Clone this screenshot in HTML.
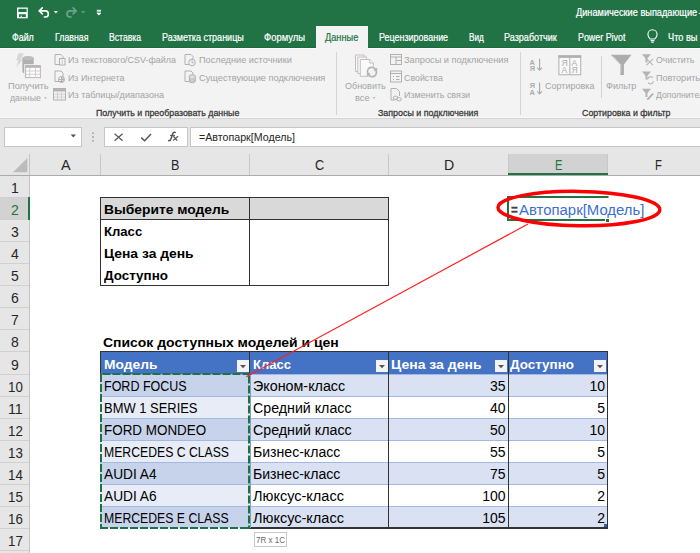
<!DOCTYPE html>
<html><head><meta charset="utf-8"><style>
html,body{margin:0;padding:0;}
body{width:700px;height:553px;overflow:hidden;position:relative;background:#fff;font-family:'Liberation Sans', sans-serif;}
.t{position:absolute;white-space:nowrap;line-height:1;transform-origin:0 0;}
svg{position:absolute;overflow:visible;}
</style></head><body>
<div style="position:absolute;left:0px;top:0px;width:700px;height:48px;background:#217346"></div>
<div style="position:absolute;left:0px;top:47px;width:700px;height:1px;background:#1c6b3f"></div>
<div style="position:absolute;left:0px;top:48px;width:700px;height:1px;background:#ffffff"></div>
<div style="position:absolute;left:0px;top:49px;width:700px;height:69px;background:#f3f3f3"></div>
<div style="position:absolute;left:0px;top:117px;width:700px;height:1px;background:#f8f8f8"></div>
<div style="position:absolute;left:0px;top:118px;width:700px;height:1px;background:#d4d4d4"></div>
<div style="position:absolute;left:0px;top:119px;width:700px;height:56px;background:#e6e6e6"></div>
<div style="position:absolute;left:316px;top:26px;width:52px;height:23px;background:#f3f3f3"></div>
<svg style="left:0;top:0" width="700" height="48" viewBox="0 0 700 48">
<rect x="17" y="7.5" width="10.8" height="10.8" fill="#fff"/>
<rect x="18.4" y="8.8" width="8.2" height="3.3" fill="#217346"/>
<rect x="19" y="14.2" width="6.8" height="2.9" fill="#217346"/>
<rect x="20.6" y="15.6" width="1.2" height="1.3" fill="#fff"/>
<g fill="none" stroke="#fff" stroke-width="1.6" stroke-linecap="round" stroke-linejoin="round">
 <path d="M39.4 10.9 H45.3 A3.05 3.05 0 0 1 45.3 17 H44.3"/>
 <path d="M42.3 7.9 L39.3 10.9 L42.3 13.9"/>
</g>
<path d="M53.8 11.1 H58 L55.9 13.5 Z" fill="#fff"/>
<g fill="none" stroke="#6fa48a" stroke-width="1.6" stroke-linecap="round" stroke-linejoin="round">
 <path d="M76 10.9 H70.1 A3.05 3.05 0 0 0 70.1 17 H71.1"/>
 <path d="M73.1 7.9 L76.1 10.9 L73.1 13.9"/>
</g>
<path d="M81 11.1 H85.2 L83.1 13.5 Z" fill="#5f9a7d"/>
<rect x="96.8" y="9.8" width="4.2" height="1.0" fill="#fff"/>
<rect x="96.8" y="11.4" width="4.2" height="1.0" fill="#fff"/>
<path d="M96.5 13 H101.3 L98.9 15.5 Z" fill="#fff"/>
</svg>
<svg style="left:0;top:0" width="700" height="48">
<g fill="none" stroke="#fff" stroke-width="1.1">
<path d="M650.2 39 C648.6 37.2 647.9 35.8 647.9 34.4 A4.6 4.6 0 0 1 657.1 34.4 C657.1 35.8 656.4 37.2 654.8 39 Z"/>
<path d="M650.6 40.6 H654.4 M651.2 42.3 H653.8"/>
</g></svg>
<div style="position:absolute;left:336px;top:52px;width:1px;height:63px;background:#d3d3d3"></div>
<div style="position:absolute;left:520px;top:52px;width:1px;height:63px;background:#d3d3d3"></div>
<div style="position:absolute;left:601px;top:56px;width:1px;height:42px;background:#d3d3d3"></div>
<svg style="left:0;top:0" width="700" height="120">
<!-- get data big icon -->
<path d="M18.5 53.2 H24 L20.5 59.5 H23 L15.8 67.4 L18.5 60.5 H16.2 Z" fill="#d6d6d6"/>
<path d="M22.4 58.2 A5.65 2 0 0 1 33.7 58.2 V72 A5.65 2 0 0 1 22.4 72 Z" fill="#b0b0b0"/>
<ellipse cx="28" cy="58.2" rx="5.65" ry="2" fill="#bdbdbd"/>
<rect x="24.2" y="64.2" width="17.6" height="14.8" fill="#f3f3f3"/>
<rect x="25.6" y="65.6" width="14.8" height="12" fill="#fff" stroke="#b9b4b7" stroke-width="1"/>
<rect x="25.6" y="65.6" width="14.8" height="2.2" fill="#b5b5b5"/>
<path d="M25.6 71 H40.4 M25.6 74.3 H40.4 M29.8 67.8 V77.6 M35.5 67.8 V77.6" stroke="#d5cdd2" stroke-width="1"/>
<path d="M43.7 97.3 H47.1 L45.4 99.1 Z" fill="#b8b8b8"/>
<!-- small icons group1 -->
<g fill="none" stroke="#b3b0b2" stroke-width="1">
 <path d="M55 54.5 H61 L63 56.5 V64.5 H55 Z"/>
 <rect x="59.5" y="58.5" width="5.5" height="6.5" fill="#f3f3f3"/>
 <path d="M62.2 59.5 V64" stroke="#cfc8cc"/>
 <path d="M55 71 H61 L63 73 V81.5 H55 Z"/>
 <circle cx="61.5" cy="79.5" r="3"/>
 <path d="M58.5 79.5 H64.5 M61.5 76.5 V82.5"/>
 <path d="M53.5 91.3 H65.5 M53.5 94.2 H65.5 M53.5 97.1 H65.5 M57.5 88.5 V100 M61.5 88.5 V100" stroke="#d6cfd3"/>
 <rect x="53.5" y="88.5" width="12" height="11.5"/>
 <rect x="53.5" y="88.5" width="12" height="2" fill="#b5b5b5"/>
 <path d="M185 54.5 H191 L193 56.5 V64.5 H185 Z"/>
 <circle cx="192" cy="62.5" r="3.3" fill="#f3f3f3"/>
 <path d="M192 60.5 V62.7 H193.8"/>
 <path d="M185 71 H191 L193 73 V81.5 H185 Z"/>
 <path d="M189.3 76 A3 1.2 0 0 1 195.3 76 V81.6 A3 1.2 0 0 1 189.3 81.6 Z" fill="#e2dde0"/>
 <path d="M189.3 78 A3 1.2 0 0 0 195.3 78 M189.3 80 A3 1.2 0 0 0 195.3 80"/>
</g>
<!-- refresh all -->
<g fill="#faf9f9" stroke="#c2bec0" stroke-width="1">
 <path d="M355.5 55 H364 V71.5 H355.5 Z"/>
 <path d="M357.8 57 H366.3 V73.5 H357.8 Z"/>
 <path d="M360.3 59.5 H369.8 L373.3 63 V76.3 H360.3 Z"/>
 <path d="M369.8 59.5 V63 H373.3"/>
</g>
<circle cx="372" cy="72" r="5.8" fill="#f3f3f3"/>
<g fill="none" stroke="#b5b5b5" stroke-width="1.7">
 <path d="M367.9 73.2 A4.2 4.2 0 0 1 375.6 69.8"/>
 <path d="M376.1 70.8 A4.2 4.2 0 0 1 368.4 74.2"/>
</g>
<path d="M377.3 67.6 L377.1 71.6 L373.4 70.6 Z M366.7 76.4 L366.9 72.4 L370.6 73.4 Z" fill="#b5b5b5"/>
<path d="M372.3 97.3 H375.7 L374 99.1 Z" fill="#b8b8b8"/>
<g fill="none" stroke="#b3b0b2" stroke-width="1">
 <rect x="390.5" y="54.5" width="11" height="10"/>
 <path d="M390.5 57 H401.5 M396 57 V64.5 M396 60.5 H401.5"/>
 <rect x="390.5" y="71" width="11" height="11"/>
 <path d="M390.5 73.5 H401.5 M393 76.5 H394 M396 76.5 H399.5 M393 79.5 H394 M396 79.5 H399.5"/>
 <path d="M391 88.5 H396.5 L399.5 91.5 V96 M395 100 H391 V88.5"/>
 <rect x="393.3" y="96.2" width="4.6" height="3.2" rx="1.6"/>
 <rect x="396.6" y="97.6" width="4.6" height="3.2" rx="1.6"/>
</g>
<!-- sort icons -->
<g font-family="Liberation Sans" font-weight="bold" font-size="7.4" fill="#ababab">
 <text x="529.6" y="64.6">А</text><text x="529.8" y="70.8">Я</text>
 <text x="529.8" y="88.4">Я</text><text x="529.6" y="94.6">А</text>
</g>
<g fill="none" stroke="#a9a9a9" stroke-width="1.1">
 <path d="M539.6 58.8 V70 M537.3 67.6 L539.6 70.2 L541.9 67.6"/>
 <path d="M539.6 82.6 V93.8 M537.3 91.4 L539.6 94 L541.9 91.4"/>
</g>
<rect x="558.9" y="55.9" width="21.8" height="18.8" fill="#faf8f9" stroke="#b8b5b7" stroke-width="1.1"/>
<rect x="558.4" y="55.3" width="22.8" height="2.6" fill="#b0b0b0"/>
<path d="M569.8 57.8 V74.6" stroke="#b8b5b7" stroke-width="1.1"/>
<g font-family="Liberation Sans" font-size="8.6" fill="#ababab">
 <text x="561.4" y="65.7">Я</text><text x="571.6" y="65.7">А</text>
 <text x="561.4" y="73.2">А</text><text x="571.6" y="73.2">Я</text>
</g>
<!-- filter -->
<path d="M610.8 54.7 H631.5 L623.9 64.5 V75 H620.3 V64.5 Z" fill="#acacac"/>
<path d="M613.5 56.6 L620.8 64.8 V73.5" fill="none" stroke="#d4d4d4" stroke-width="0.9"/>
<path d="M641.9 54.3 H651 L647.4 58.6 V62.5 H645.5 V58.6 Z" fill="#b3b3b3"/>
<path d="M646.5 58.8 L653 65.2 M653 58.8 L646.5 65.2" stroke="#b5b5b5" stroke-width="1.1"/>
<path d="M641.9 71.5 H651 L647.4 75.8 V79.6 H645.5 V75.8 Z" fill="#b3b3b3"/>
<path d="M647.6 79.5 A3 3 0 0 1 653 78 M653.4 81.2 A3 3 0 0 1 648 82.7" fill="none" stroke="#b5b5b5" stroke-width="1.1"/>
<path d="M641.9 88.8 H651 L647.4 93.1 V97 H645.5 V93.1 Z" fill="#b3b3b3"/>
<path d="M647.3 99.6 L653.2 93.6" stroke="#b0b0b0" stroke-width="1.8"/>
</svg>
<div style="position:absolute;left:4px;top:127px;width:78px;height:20px;background:#fff;border:1px solid #c6c6c6;box-sizing:border-box"></div>
<div style="position:absolute;left:104px;top:127px;width:84px;height:20px;background:#fff;border:1px solid #c6c6c6;box-sizing:border-box"></div>
<div style="position:absolute;left:190px;top:127px;width:520px;height:20px;background:#fff;border:1px solid #c6c6c6;box-sizing:border-box"></div>
<svg style="left:0;top:0" width="700" height="160">
<path d="M70.7 134.6 H75.9 L73.3 137.4 Z" fill="#505050"/>
<g fill="#8a8a8a"><rect x="92.3" y="132.5" width="1.4" height="1.4"/><rect x="92.3" y="136.3" width="1.4" height="1.4"/><rect x="92.3" y="140.1" width="1.4" height="1.4"/></g>
<path d="M114.6 133.8 L122.6 140.8 M122.6 133.8 L114.6 140.8" stroke="#555" stroke-width="1.2"/>
<path d="M141.2 137.6 L144.6 140.8 L151 134" fill="none" stroke="#555" stroke-width="1.5"/>
<g fill="none" stroke="#555" stroke-linecap="round">
<path d="M168.6 140.6 C169.9 141 170.6 140.2 171.2 138.3 L172.6 134 C173.1 132.5 174 132 175.2 132.4" stroke-width="1.5"/>
<path d="M170.4 135.4 H174.6" stroke-width="1"/>
<path d="M173.6 136.6 C175 137 175.6 139.4 177 140.2 M177.8 136.6 C176.6 137.4 175 139.2 173.4 140.2" stroke-width="1.2"/>
</g>
</svg>
<svg style="left:0;top:0" width="700" height="180"><path d="M13 172.2 H27.4 V158 Z" fill="#bcbcbc"/></svg>
<div style="position:absolute;left:508px;top:154px;width:100px;height:21px;background:#d2d2d2"></div>
<div style="position:absolute;left:100px;top:154px;width:1px;height:21px;background:#c8c8c8"></div>
<div style="position:absolute;left:249px;top:154px;width:1px;height:21px;background:#c8c8c8"></div>
<div style="position:absolute;left:388px;top:154px;width:1px;height:21px;background:#c8c8c8"></div>
<div style="position:absolute;left:508px;top:154px;width:1px;height:21px;background:#c8c8c8"></div>
<div style="position:absolute;left:607px;top:154px;width:1px;height:21px;background:#c8c8c8"></div>
<div style="position:absolute;left:29px;top:154px;width:1px;height:399px;background:#c4c4c4"></div>
<div style="position:absolute;left:0px;top:175px;width:700px;height:1px;background:#ababab"></div>
<div style="position:absolute;left:508px;top:173px;width:100px;height:2px;background:#217346"></div>
<div style="position:absolute;left:30px;top:176px;width:670px;height:377px;background:#fff"></div>
<div style="position:absolute;left:0px;top:176px;width:29px;height:377px;background:#e6e6e6"></div>
<div style="position:absolute;left:0px;top:197px;width:29px;height:22px;background:#d2d2d2"></div>
<div style="position:absolute;left:0px;top:197px;width:29px;height:1px;background:#d0d0d0"></div>
<div style="position:absolute;left:0px;top:219px;width:29px;height:1px;background:#d0d0d0"></div>
<div style="position:absolute;left:0px;top:241px;width:29px;height:1px;background:#d0d0d0"></div>
<div style="position:absolute;left:0px;top:263px;width:29px;height:1px;background:#d0d0d0"></div>
<div style="position:absolute;left:0px;top:285px;width:29px;height:1px;background:#d0d0d0"></div>
<div style="position:absolute;left:0px;top:307px;width:29px;height:1px;background:#d0d0d0"></div>
<div style="position:absolute;left:0px;top:329px;width:29px;height:1px;background:#d0d0d0"></div>
<div style="position:absolute;left:0px;top:351px;width:29px;height:1px;background:#d0d0d0"></div>
<div style="position:absolute;left:0px;top:374px;width:29px;height:1px;background:#d0d0d0"></div>
<div style="position:absolute;left:0px;top:396px;width:29px;height:1px;background:#d0d0d0"></div>
<div style="position:absolute;left:0px;top:418px;width:29px;height:1px;background:#d0d0d0"></div>
<div style="position:absolute;left:0px;top:440px;width:29px;height:1px;background:#d0d0d0"></div>
<div style="position:absolute;left:0px;top:462px;width:29px;height:1px;background:#d0d0d0"></div>
<div style="position:absolute;left:0px;top:484px;width:29px;height:1px;background:#d0d0d0"></div>
<div style="position:absolute;left:0px;top:506px;width:29px;height:1px;background:#d0d0d0"></div>
<div style="position:absolute;left:0px;top:528px;width:29px;height:1px;background:#d0d0d0"></div>
<div style="position:absolute;left:0px;top:550px;width:29px;height:1px;background:#d0d0d0"></div>
<div style="position:absolute;left:28px;top:197px;width:2px;height:23px;background:#217346"></div>
<div style="position:absolute;left:100px;top:197px;width:289px;height:89px;border:1px solid #333;box-sizing:border-box"></div>
<div style="position:absolute;left:100px;top:197px;width:289px;height:23px;background:#d9d9d9;border:1px solid #333;box-sizing:border-box"></div>
<div style="position:absolute;left:249px;top:197px;width:1px;height:89px;background:#333"></div>
<div style="position:absolute;left:100px;top:351px;width:508px;height:23px;background:#4472c4"></div>
<div style="position:absolute;left:100px;top:374px;width:149px;height:22px;background:#c7d3eb"></div>
<div style="position:absolute;left:249px;top:374px;width:139px;height:22px;background:#d9e1f2"></div>
<div style="position:absolute;left:388px;top:374px;width:120px;height:22px;background:#d9e1f2"></div>
<div style="position:absolute;left:508px;top:374px;width:99px;height:22px;background:#d9e1f2"></div>
<div style="position:absolute;left:100px;top:396px;width:149px;height:22px;background:#e7ecf6"></div>
<div style="position:absolute;left:249px;top:396px;width:139px;height:22px;background:#ffffff"></div>
<div style="position:absolute;left:388px;top:396px;width:120px;height:22px;background:#ffffff"></div>
<div style="position:absolute;left:508px;top:396px;width:99px;height:22px;background:#ffffff"></div>
<div style="position:absolute;left:100px;top:418px;width:149px;height:22px;background:#c7d3eb"></div>
<div style="position:absolute;left:249px;top:418px;width:139px;height:22px;background:#d9e1f2"></div>
<div style="position:absolute;left:388px;top:418px;width:120px;height:22px;background:#d9e1f2"></div>
<div style="position:absolute;left:508px;top:418px;width:99px;height:22px;background:#d9e1f2"></div>
<div style="position:absolute;left:100px;top:440px;width:149px;height:22px;background:#e7ecf6"></div>
<div style="position:absolute;left:249px;top:440px;width:139px;height:22px;background:#ffffff"></div>
<div style="position:absolute;left:388px;top:440px;width:120px;height:22px;background:#ffffff"></div>
<div style="position:absolute;left:508px;top:440px;width:99px;height:22px;background:#ffffff"></div>
<div style="position:absolute;left:100px;top:462px;width:149px;height:22px;background:#c7d3eb"></div>
<div style="position:absolute;left:249px;top:462px;width:139px;height:22px;background:#d9e1f2"></div>
<div style="position:absolute;left:388px;top:462px;width:120px;height:22px;background:#d9e1f2"></div>
<div style="position:absolute;left:508px;top:462px;width:99px;height:22px;background:#d9e1f2"></div>
<div style="position:absolute;left:100px;top:484px;width:149px;height:22px;background:#e7ecf6"></div>
<div style="position:absolute;left:249px;top:484px;width:139px;height:22px;background:#ffffff"></div>
<div style="position:absolute;left:388px;top:484px;width:120px;height:22px;background:#ffffff"></div>
<div style="position:absolute;left:508px;top:484px;width:99px;height:22px;background:#ffffff"></div>
<div style="position:absolute;left:100px;top:506px;width:149px;height:22px;background:#c7d3eb"></div>
<div style="position:absolute;left:249px;top:506px;width:139px;height:22px;background:#d9e1f2"></div>
<div style="position:absolute;left:388px;top:506px;width:120px;height:22px;background:#d9e1f2"></div>
<div style="position:absolute;left:508px;top:506px;width:99px;height:22px;background:#d9e1f2"></div>
<div style="position:absolute;left:100px;top:374px;width:508px;height:1px;background:#a4b9e1"></div>
<div style="position:absolute;left:100px;top:396px;width:508px;height:1px;background:#a4b9e1"></div>
<div style="position:absolute;left:100px;top:418px;width:508px;height:1px;background:#a4b9e1"></div>
<div style="position:absolute;left:100px;top:440px;width:508px;height:1px;background:#a4b9e1"></div>
<div style="position:absolute;left:100px;top:462px;width:508px;height:1px;background:#a4b9e1"></div>
<div style="position:absolute;left:100px;top:484px;width:508px;height:1px;background:#a4b9e1"></div>
<div style="position:absolute;left:100px;top:506px;width:508px;height:1px;background:#a4b9e1"></div>
<div style="position:absolute;left:604px;top:524px;width:4px;height:3px;background:#3a5fb0"></div>
<div style="position:absolute;left:100px;top:351px;width:508px;height:1px;background:#333333"></div>
<div style="position:absolute;left:250px;top:527px;width:358px;height:2px;background:#333333"></div>
<div style="position:absolute;left:100px;top:351px;width:1px;height:23px;background:#333333"></div>
<div style="position:absolute;left:249px;top:351px;width:1px;height:23px;background:#333333"></div>
<div style="position:absolute;left:388px;top:351px;width:1px;height:178px;background:#333333"></div>
<div style="position:absolute;left:508px;top:351px;width:1px;height:178px;background:#333333"></div>
<div style="position:absolute;left:607px;top:351px;width:1px;height:178px;background:#333333"></div>
<div style="position:absolute;left:250px;top:374px;width:1px;height:154px;background:#7f9fd8"></div>
<div style="position:absolute;left:237px;top:360px;width:12px;height:12px;background:#f3f3f3"></div>
<div style="position:absolute;left:376px;top:360px;width:12px;height:12px;background:#f3f3f3"></div>
<div style="position:absolute;left:495px;top:360px;width:12px;height:12px;background:#f3f3f3"></div>
<div style="position:absolute;left:594px;top:360px;width:12px;height:12px;background:#f3f3f3"></div>
<svg style="left:0;top:0" width="700" height="553"><path d="M240 365 H246 L243 368.2 Z" fill="#555"/><path d="M379 365 H385 L382 368.2 Z" fill="#555"/><path d="M498 365 H504 L501 368.2 Z" fill="#555"/><path d="M597 365 H603 L600 368.2 Z" fill="#555"/></svg>
<div style="position:absolute;left:254px;top:532px;width:33px;height:15px;background:#fff;border:1px solid #c8c8c8;box-sizing:border-box"></div>
<div class="t" style="left:576.00px;top:7.83px;font-size:10px;font-weight:normal;color:#ffffff;transform:scaleX(0.9200);-webkit-text-stroke:0.2px #fff">Динамические выпадающие</div>
<div class="t" style="left:698.60px;top:7.83px;font-size:10px;font-weight:normal;color:#ffffff;">-</div>
<div class="t" style="left:11.60px;top:32.93px;font-size:10px;font-weight:normal;color:#ffffff;transform:scaleX(0.8864);-webkit-text-stroke:0.2px #fff">Файл</div>
<div class="t" style="left:55.30px;top:32.93px;font-size:10px;font-weight:normal;color:#ffffff;transform:scaleX(0.8775);-webkit-text-stroke:0.2px #fff">Главная</div>
<div class="t" style="left:109.30px;top:32.93px;font-size:10px;font-weight:normal;color:#ffffff;transform:scaleX(0.8636);-webkit-text-stroke:0.2px #fff">Вставка</div>
<div class="t" style="left:161.80px;top:32.93px;font-size:10px;font-weight:normal;color:#ffffff;transform:scaleX(0.9017);-webkit-text-stroke:0.2px #fff">Разметка страницы</div>
<div class="t" style="left:263.60px;top:32.93px;font-size:10px;font-weight:normal;color:#ffffff;transform:scaleX(0.9422);-webkit-text-stroke:0.2px #fff">Формулы</div>
<div class="t" style="left:378.60px;top:32.93px;font-size:10px;font-weight:normal;color:#ffffff;transform:scaleX(0.8949);-webkit-text-stroke:0.2px #fff">Рецензирование</div>
<div class="t" style="left:468.60px;top:32.93px;font-size:10px;font-weight:normal;color:#ffffff;transform:scaleX(0.8180);-webkit-text-stroke:0.2px #fff">Вид</div>
<div class="t" style="left:504.30px;top:32.93px;font-size:10px;font-weight:normal;color:#ffffff;transform:scaleX(0.9052);-webkit-text-stroke:0.2px #fff">Разработчик</div>
<div class="t" style="left:578.00px;top:32.93px;font-size:10px;font-weight:normal;color:#ffffff;transform:scaleX(0.8883);-webkit-text-stroke:0.2px #fff">Power Pivot</div>
<div class="t" style="left:325.00px;top:32.93px;font-size:10px;font-weight:normal;color:#217346;transform:scaleX(0.9214);-webkit-text-stroke:0.2px #217346">Данные</div>
<div class="t" style="left:668.00px;top:32.93px;font-size:10px;font-weight:normal;color:#ffffff;transform:scaleX(0.9227);-webkit-text-stroke:0.2px #fff">Что вы хотите сделать?</div>
<div class="t" style="left:7.80px;top:81.24px;font-size:9.4px;font-weight:normal;color:#a3a3a3;transform:scaleX(0.9854);">Получить</div>
<div class="t" style="left:10.30px;top:92.64px;font-size:9.4px;font-weight:normal;color:#a3a3a3;transform:scaleX(0.9333);">данные</div>
<div class="t" style="left:68.00px;top:55.34px;font-size:9.4px;font-weight:normal;color:#a3a3a3;transform:scaleX(0.9540);">Из текстового/CSV-файла</div>
<div class="t" style="left:68.00px;top:72.54px;font-size:9.4px;font-weight:normal;color:#a3a3a3;transform:scaleX(0.9454);">Из Интернета</div>
<div class="t" style="left:68.00px;top:89.84px;font-size:9.4px;font-weight:normal;color:#a3a3a3;transform:scaleX(0.9665);">Из таблицы/диапазона</div>
<div class="t" style="left:198.90px;top:55.34px;font-size:9.4px;font-weight:normal;color:#a3a3a3;transform:scaleX(0.9812);">Последние источники</div>
<div class="t" style="left:198.90px;top:72.54px;font-size:9.4px;font-weight:normal;color:#a3a3a3;transform:scaleX(0.9854);">Существующие подключения</div>
<div class="t" style="left:95.70px;top:108.16px;font-size:9.5px;font-weight:normal;color:#3a3a3a;transform:scaleX(0.9296);-webkit-text-stroke:0.3px #3a3a3a">Получить и преобразовать данные</div>
<div class="t" style="left:344.50px;top:81.34px;font-size:9.4px;font-weight:normal;color:#a3a3a3;transform:scaleX(0.9587);">Обновить</div>
<div class="t" style="left:355.40px;top:92.64px;font-size:9.4px;font-weight:normal;color:#a3a3a3;transform:scaleX(0.9810);">все</div>
<div class="t" style="left:404.20px;top:55.34px;font-size:9.4px;font-weight:normal;color:#a3a3a3;transform:scaleX(0.9867);">Запросы и подключения</div>
<div class="t" style="left:404.20px;top:72.54px;font-size:9.4px;font-weight:normal;color:#a3a3a3;transform:scaleX(0.9424);">Свойства</div>
<div class="t" style="left:404.20px;top:89.84px;font-size:9.4px;font-weight:normal;color:#a3a3a3;transform:scaleX(0.9554);">Изменить связи</div>
<div class="t" style="left:377.60px;top:108.16px;font-size:9.5px;font-weight:normal;color:#3a3a3a;transform:scaleX(0.9356);-webkit-text-stroke:0.3px #3a3a3a">Запросы и подключения</div>
<div class="t" style="left:545.40px;top:81.04px;font-size:9.4px;font-weight:normal;color:#a3a3a3;transform:scaleX(0.9601);">Сортировка</div>
<div class="t" style="left:606.20px;top:81.04px;font-size:9.4px;font-weight:normal;color:#a3a3a3;transform:scaleX(0.9651);">Фильтр</div>
<div class="t" style="left:656.40px;top:55.34px;font-size:9.4px;font-weight:normal;color:#a3a3a3;transform:scaleX(0.9384);">Очистить</div>
<div class="t" style="left:656.40px;top:72.54px;font-size:9.4px;font-weight:normal;color:#a3a3a3;transform:scaleX(0.9614);">Повторить</div>
<div class="t" style="left:656.40px;top:89.84px;font-size:9.4px;font-weight:normal;color:#a3a3a3;transform:scaleX(0.9187);">Дополнительно</div>
<div class="t" style="left:582.40px;top:108.16px;font-size:9.5px;font-weight:normal;color:#3a3a3a;transform:scaleX(0.9293);-webkit-text-stroke:0.3px #3a3a3a">Сортировка и фильтр</div>
<div class="t" style="left:199.00px;top:133.23px;font-size:10px;font-weight:normal;color:#262626;transform:scaleX(1.0667);">=Автопарк[Модель]</div>
<div class="t" style="left:60.80px;top:158.15px;font-size:14px;font-weight:normal;color:#262626;transform:scaleX(1.0274);">A</div>
<div class="t" style="left:171.40px;top:158.15px;font-size:14px;font-weight:normal;color:#262626;transform:scaleX(0.8990);">B</div>
<div class="t" style="left:314.90px;top:158.15px;font-size:14px;font-weight:normal;color:#262626;transform:scaleX(0.9086);">C</div>
<div class="t" style="left:444.20px;top:158.15px;font-size:14px;font-weight:normal;color:#262626;transform:scaleX(1.0074);">D</div>
<div class="t" style="left:554.80px;top:158.15px;font-size:14px;font-weight:normal;color:#217346;transform:scaleX(0.7920);">E</div>
<div class="t" style="left:655.15px;top:158.15px;font-size:14px;font-weight:normal;color:#262626;transform:scaleX(0.8058);">F</div>
<div class="t" style="left:11.10px;top:180.85px;font-size:14px;font-weight:normal;color:#262626;">1</div>
<div class="t" style="left:11.10px;top:202.85px;font-size:14px;font-weight:normal;color:#217346;">2</div>
<div class="t" style="left:11.10px;top:224.85px;font-size:14px;font-weight:normal;color:#262626;">3</div>
<div class="t" style="left:11.10px;top:246.85px;font-size:14px;font-weight:normal;color:#262626;">4</div>
<div class="t" style="left:11.10px;top:268.85px;font-size:14px;font-weight:normal;color:#262626;">5</div>
<div class="t" style="left:11.10px;top:290.85px;font-size:14px;font-weight:normal;color:#262626;">6</div>
<div class="t" style="left:11.10px;top:312.85px;font-size:14px;font-weight:normal;color:#262626;">7</div>
<div class="t" style="left:11.10px;top:334.85px;font-size:14px;font-weight:normal;color:#262626;">8</div>
<div class="t" style="left:11.10px;top:357.85px;font-size:14px;font-weight:normal;color:#262626;">9</div>
<div class="t" style="left:7.60px;top:379.85px;font-size:14px;font-weight:normal;color:#262626;transform:scaleX(0.9501);">10</div>
<div class="t" style="left:7.60px;top:401.85px;font-size:14px;font-weight:normal;color:#262626;transform:scaleX(1.0174);">11</div>
<div class="t" style="left:7.60px;top:423.85px;font-size:14px;font-weight:normal;color:#262626;transform:scaleX(0.9501);">12</div>
<div class="t" style="left:7.60px;top:445.85px;font-size:14px;font-weight:normal;color:#262626;transform:scaleX(0.9501);">13</div>
<div class="t" style="left:7.60px;top:467.85px;font-size:14px;font-weight:normal;color:#262626;transform:scaleX(0.9501);">14</div>
<div class="t" style="left:7.60px;top:489.85px;font-size:14px;font-weight:normal;color:#262626;transform:scaleX(0.9501);">15</div>
<div class="t" style="left:7.60px;top:511.85px;font-size:14px;font-weight:normal;color:#262626;transform:scaleX(0.9501);">16</div>
<div class="t" style="left:7.60px;top:533.85px;font-size:14px;font-weight:normal;color:#262626;transform:scaleX(0.9501);">17</div>
<div class="t" style="left:104.10px;top:202.97px;font-size:13.5px;font-weight:bold;color:#000;transform:scaleX(1.0239);">Выберите модель</div>
<div class="t" style="left:103.70px;top:224.77px;font-size:13.5px;font-weight:bold;color:#000;transform:scaleX(0.9709);">Класс</div>
<div class="t" style="left:103.70px;top:246.97px;font-size:13.5px;font-weight:bold;color:#000;transform:scaleX(1.0266);">Цена за день</div>
<div class="t" style="left:103.70px;top:268.77px;font-size:13.5px;font-weight:bold;color:#000;transform:scaleX(0.9942);">Доступно</div>
<div class="t" style="left:103.20px;top:335.87px;font-size:13.5px;font-weight:bold;color:#000;transform:scaleX(1.0338);">Список доступных моделей и цен</div>
<div class="t" style="left:104.40px;top:357.57px;font-size:13.5px;font-weight:bold;color:#fff;transform:scaleX(1.0233);">Модель</div>
<div class="t" style="left:253.10px;top:357.57px;font-size:13.5px;font-weight:bold;color:#fff;transform:scaleX(0.9658);">Класс</div>
<div class="t" style="left:391.30px;top:357.57px;font-size:13.5px;font-weight:bold;color:#fff;transform:scaleX(1.0369);">Цена за день</div>
<div class="t" style="left:510.30px;top:357.57px;font-size:13.5px;font-weight:bold;color:#fff;transform:scaleX(0.9942);">Доступно</div>
<div class="t" style="left:104.30px;top:379.35px;font-size:14px;font-weight:normal;color:#000;transform:scaleX(0.8935);">FORD FOCUS</div>
<div class="t" style="left:253.20px;top:379.35px;font-size:14px;font-weight:normal;color:#000;transform:scaleX(1.0223);">Эконом-класс</div>
<div class="t" style="left:490.02px;top:379.35px;font-size:14px;font-weight:normal;color:#000;">35</div>
<div class="t" style="left:589.52px;top:379.35px;font-size:14px;font-weight:normal;color:#000;">10</div>
<div class="t" style="left:104.30px;top:401.35px;font-size:14px;font-weight:normal;color:#000;transform:scaleX(0.9245);">BMW 1 SERIES</div>
<div class="t" style="left:253.20px;top:401.35px;font-size:14px;font-weight:normal;color:#000;transform:scaleX(1.0150);">Средний класс</div>
<div class="t" style="left:490.02px;top:401.35px;font-size:14px;font-weight:normal;color:#000;">40</div>
<div class="t" style="left:597.30px;top:401.35px;font-size:14px;font-weight:normal;color:#000;">5</div>
<div class="t" style="left:104.30px;top:423.35px;font-size:14px;font-weight:normal;color:#000;transform:scaleX(0.9591);">FORD MONDEO</div>
<div class="t" style="left:253.20px;top:423.35px;font-size:14px;font-weight:normal;color:#000;transform:scaleX(1.0170);">Средний класс</div>
<div class="t" style="left:490.02px;top:423.35px;font-size:14px;font-weight:normal;color:#000;">50</div>
<div class="t" style="left:589.52px;top:423.35px;font-size:14px;font-weight:normal;color:#000;">10</div>
<div class="t" style="left:104.30px;top:445.35px;font-size:14px;font-weight:normal;color:#000;transform:scaleX(0.8732);">MERCEDES C CLASS</div>
<div class="t" style="left:253.20px;top:445.35px;font-size:14px;font-weight:normal;color:#000;transform:scaleX(1.0053);">Бизнес-класс</div>
<div class="t" style="left:490.02px;top:445.35px;font-size:14px;font-weight:normal;color:#000;">55</div>
<div class="t" style="left:597.30px;top:445.35px;font-size:14px;font-weight:normal;color:#000;">5</div>
<div class="t" style="left:104.30px;top:467.35px;font-size:14px;font-weight:normal;color:#000;transform:scaleX(0.9795);">AUDI A4</div>
<div class="t" style="left:253.20px;top:467.35px;font-size:14px;font-weight:normal;color:#000;transform:scaleX(1.0053);">Бизнес-класс</div>
<div class="t" style="left:490.02px;top:467.35px;font-size:14px;font-weight:normal;color:#000;">75</div>
<div class="t" style="left:597.30px;top:467.35px;font-size:14px;font-weight:normal;color:#000;">5</div>
<div class="t" style="left:104.30px;top:489.35px;font-size:14px;font-weight:normal;color:#000;transform:scaleX(0.9795);">AUDI A6</div>
<div class="t" style="left:253.20px;top:489.35px;font-size:14px;font-weight:normal;color:#000;transform:scaleX(1.0363);">Люксус-класс</div>
<div class="t" style="left:482.24px;top:489.35px;font-size:14px;font-weight:normal;color:#000;">100</div>
<div class="t" style="left:597.30px;top:489.35px;font-size:14px;font-weight:normal;color:#000;">2</div>
<div class="t" style="left:104.30px;top:511.35px;font-size:14px;font-weight:normal;color:#000;transform:scaleX(0.8752);">MERCEDES E CLASS</div>
<div class="t" style="left:253.20px;top:511.35px;font-size:14px;font-weight:normal;color:#000;transform:scaleX(1.0363);">Люксус-класс</div>
<div class="t" style="left:482.24px;top:511.35px;font-size:14px;font-weight:normal;color:#000;">105</div>
<div class="t" style="left:597.30px;top:511.35px;font-size:14px;font-weight:normal;color:#000;">2</div>
<div class="t" style="left:255.60px;top:535.78px;font-size:9px;font-weight:normal;color:#6b6b6b;transform:scaleX(0.8919);">7R x 1C</div>
<div class="t" style="left:511.00px;top:201.68px;font-size:15.5px;font-weight:normal;color:#404040;transform:scaleX(0.7503);-webkit-text-stroke:0.5px #404040">=</div>
<div class="t" style="left:519.00px;top:201.68px;font-size:15.5px;font-weight:normal;color:#3b6fd6;transform:scaleX(0.9620);">Автопарк[Модель]</div>
<svg style="left:0;top:0" width="700" height="553">
<g fill="none" stroke="#1e7145" stroke-width="2" stroke-dasharray="8 2">
<path d="M100 374 H250" stroke-dashoffset="7.5"/>
<path d="M100 528 H250"/>
<path d="M101 373 V529" stroke-dashoffset="-1"/>
<path d="M249 373 V529" stroke-dashoffset="-2.5"/>
</g>
<path d="M608.5 197 H508 V220 H605" fill="none" stroke="#217346" stroke-width="2"/>
<rect x="605.5" y="218.5" width="4" height="4" fill="#217346" stroke="#fff" stroke-width="1"/>
</svg>
<svg style="left:0;top:0" width="700" height="553">
<line x1="528" y1="224" x2="246.3" y2="376.8" stroke="#ff2020" stroke-width="1.2"/>
<ellipse cx="578.9" cy="208.6" rx="80.9" ry="17.2" fill="none" stroke="#ff0000" stroke-width="3.5" transform="rotate(0.8 578.9 208.6)"/>
</svg>
</body></html>
